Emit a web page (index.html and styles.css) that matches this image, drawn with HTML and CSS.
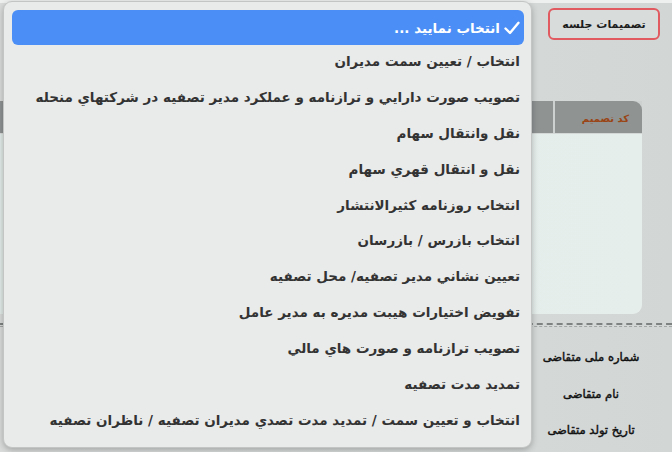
FILE: index.html
```html
<!DOCTYPE html>
<html lang="fa" dir="rtl">
<head>
<meta charset="utf-8">
<link rel="stylesheet" href="styles.css">
</head>
<body>
<div class="page">
  <div class="topstrip"></div>
  <div class="field-row">
    <div class="field-label">تصمیمات جلسه</div>
  </div>
  <div class="table">
    <div class="thead">
      <div class="th th-code">کد تصمیم</div>
      <div class="th th-rest"></div>
    </div>
    <div class="tbody"></div>
  </div>
  <div class="dashed"></div>
  <div class="form">
    <div class="label">شماره ملی متقاضی</div>
    <div class="label">نام متقاضی</div>
    <div class="label">تاریخ تولد متقاضی</div>
  </div>
</div>

<div class="menu">
  <div class="item selected">
    <svg class="check" width="16" height="14" viewBox="0 0 16 14"><polyline points="1.5,7.5 6,12 14.5,1.8" fill="none" stroke="#ffffff" stroke-width="2.4" stroke-linecap="round" stroke-linejoin="round"/></svg>
    <span>انتخاب نمایید ...</span>
  </div>
  <div class="item">انتخاب / تعیین سمت مدیران</div>
  <div class="item">تصویب صورت دارايي و ترازنامه و عملکرد مدير تصفيه در شرکتهاي منحله</div>
  <div class="item">نقل وانتقال سهام</div>
  <div class="item">نقل و انتقال قهري سهام</div>
  <div class="item">انتخاب روزنامه کثيرالانتشار</div>
  <div class="item">انتخاب بازرس / بازرسان</div>
  <div class="item">تعيين نشاني مدير تصفيه/ محل تصفيه</div>
  <div class="item">تفويض اختيارات هيبت مديره به مدير عامل</div>
  <div class="item">تصويب ترازنامه و صورت هاي مالي</div>
  <div class="item">تمديد مدت تصفيه</div>
  <div class="item">انتخاب و تعيين سمت / تمديد مدت تصدي مديران تصفيه / ناظران تصفيه</div>
</div>
</body>
</html>
```

FILE: styles.css
```css
* { box-sizing: border-box; }

html, body {
  margin: 0;
  padding: 0;
}

body {
  width: 672px;
  height: 452px;
  overflow: hidden;
  background: linear-gradient(90deg, #d9dcdb 0%, #d6dad9 60%, #d2d7d6 100%);
  font-family: "DejaVu Sans", "Noto Sans", sans-serif;
  color: #222;
  position: relative;
}

.page {
  display: flex;
  flex-direction: column;
}

.topstrip {
  height: 3px;
  background: #eeefef;
}

.field-row {
  display: flex;
  justify-content: flex-start;
  padding-right: 12px;
  margin-top: 5px;
}

.field-label {
  width: 112px;
  height: 32px;
  border: 2px solid #e05a60;
  border-radius: 6px;
  display: flex;
  align-items: center;
  justify-content: center;
  font-size: 11px;
  font-weight: bold;
  color: #1c1c1c;
  background: #d8dcdb;
}

.table {
  margin-top: 61px;
  margin-right: 30px;
  display: flex;
  flex-direction: column;
}

.thead {
  display: flex;
  height: 32px;
  gap: 2px;
  background: #cdd1d0;
}

.th {
  background: #8f9392;
}

.th-code {
  width: 87px;
  border-top-right-radius: 9px;
  display: flex;
  align-items: center;
  justify-content: center;
  padding-left: 14px;
  padding-top: 2px;
  font-size: 10px;
  font-weight: bold;
  color: #9a4516;
}

.th-rest {
  flex: 1;
}

.tbody {
  margin-top: 1px;
  height: 180px;
  background: linear-gradient(90deg, #e2ebe9, #e6eeec);
  border-bottom-right-radius: 9px;
}

.dashed {
  margin-top: 9px;
  height: 4px;
  border-top: 2px dashed #7e8382;
  border-bottom: 1px dashed #a3a7a6;
}

.form {
  display: flex;
  flex-direction: column;
  align-items: center;
  width: 112px;
  margin-right: 25px;
  margin-top: 19px;
  gap: 14.5px;
}

.label {
  font-size: 11.5px;
  font-weight: normal;
  color: #111;
  line-height: 22px;
  white-space: nowrap;
  -webkit-text-stroke: 0.45px #111;
}

.menu {
  position: absolute;
  left: 3px;
  top: 1px;
  width: 529px;
  height: 447px;
  background: #e9eaea;
  border: 1px solid #c3c5c5;
  border-radius: 9px;
  box-shadow: 0 2px 6px rgba(0, 0, 0, 0.25);
  padding: 8px 7px 0 8px;
  display: flex;
  flex-direction: column;
}

.item {
  height: 35.9px;
  flex: none;
  display: flex;
  align-items: center;
  justify-content: flex-start;
  padding-right: 4px;
  font-size: 13.5px;
  font-weight: bold;
  color: #333;
  white-space: nowrap;
}

.item.selected {
  height: 35px;
  margin-bottom: -2px;
  background: #4b8ff6;
  border-radius: 6px;
  color: #fff;
  padding-right: 4px;
  gap: 4px;
}

.check {
  flex: none;
}
```
